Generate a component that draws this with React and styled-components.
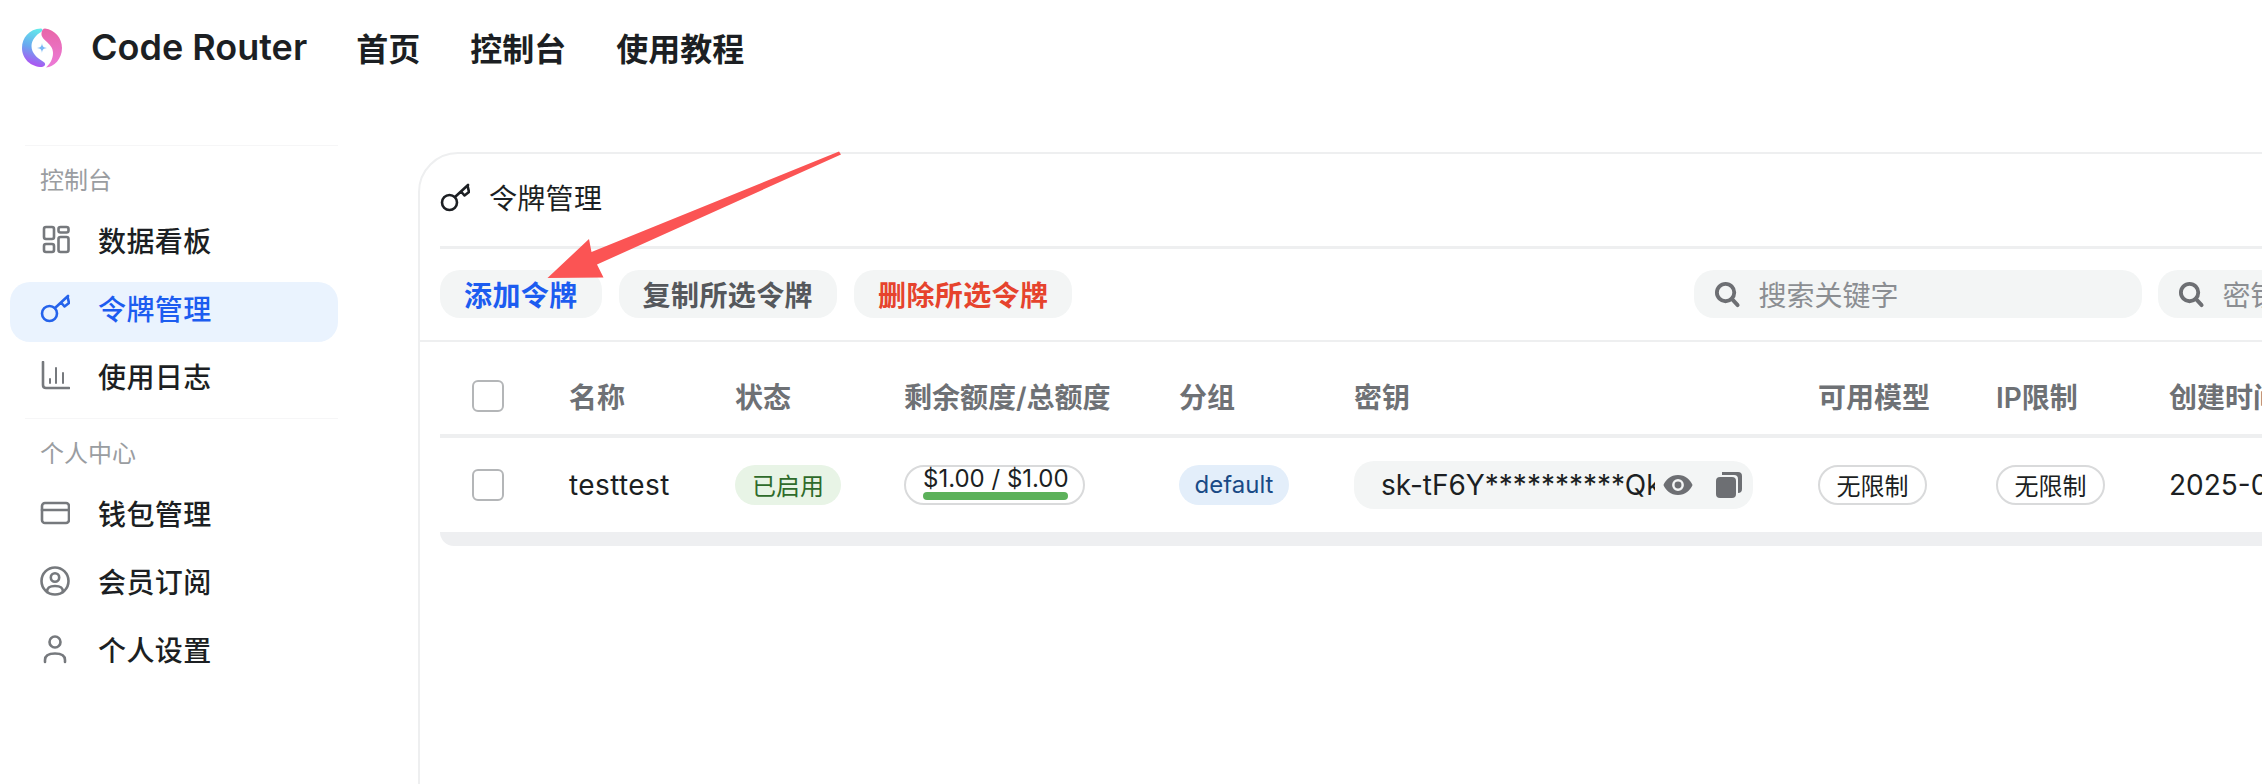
import React from 'react';
import styled, { createGlobalStyle } from 'styled-components';

const Global = createGlobalStyle`
  html, body { margin: 0; padding: 0; background: #fff; overflow: hidden; }
  * { box-sizing: border-box; }
  body { font-family: Inter, "Noto Sans CJK SC", sans-serif; color: #1c1f23; }
`;
const Page = styled.div`position: relative; width: 2262px; height: 784px; overflow: hidden;`;
const Header = styled.header`display: flex; align-items: center; height: 96px; padding-left: 22px;`;
const Brand = styled.div`font-size: 36px; font-weight: 600; margin: 0 49px 2px 29px; white-space: nowrap;`;
const NavLink = styled.a`font-size: 32px; font-weight: 600; margin: 0 50px 2px 0; white-space: nowrap;`;
const Body = styled.div`display: flex; align-items: flex-start;`;
const Sidebar = styled.aside`flex: 0 0 418px; padding: 49px 80px 0 10px;`;
const Rule = styled.div`height: 1px; background: #f6f6f7; margin: ${p => p.$top || 0}px 0 0 15px;`;
const GroupLabel = styled.div`font-size: 24px; color: #9a9da1; line-height: 34px; padding-left: 30px; margin: ${p => p.$top}px 0 ${p => p.$bottom}px;`;
const Group = styled.nav`display: flex; flex-direction: column; gap: 8px;`;
const Item = styled.div`
  display: flex; align-items: center; height: 60px; padding: 0 0 8px 30px; border-radius: 20px;
  font-size: 28px; font-weight: 500; gap: 28px; white-space: nowrap; letter-spacing: .4px;
  color: ${p => p.$active ? '#1c5cf0' : '#1c1f23'};
  background: ${p => p.$active ? '#eaf3fe' : 'transparent'};
  svg { flex: none; color: ${p => p.$active ? '#2563eb' : '#76797d'}; }
`;
const Main = styled.main`flex: none; padding-top: 56px;`;
const Card = styled.section`width: 1900px; height: 700px; border: 2.5px solid #eeeff0; border-radius: 40px;`;
const CardHead = styled.div`margin-left: 20px; display: flex; align-items: center; gap: 19px; height: 92px; padding-bottom: 7px; font-size: 28px; letter-spacing: .3px; white-space: nowrap;`;
const HeadRule = styled.div`height: 2.5px; background: #eeeff0; margin-left: 20px;`;
const Toolbar = styled.div`display: flex; align-items: center; height: 93px; padding-left: 20px; border-bottom: 2.5px solid #eeeff0;`;
const Btn = styled.button`
  height: 48px; border: 0; border-radius: 20px; background: #f3f5f5; font: 600 28px Inter, "Noto Sans CJK SC", sans-serif; letter-spacing: .4px;
  padding: 0 24px; margin-right: 17px; white-space: nowrap; color: ${p => p.$color};
`;
const Search = styled.div`
  flex: none; display: flex; align-items: center; gap: 17px; width: 448px; height: 48px; border-radius: 20px; background: #f3f5f5;
  padding-left: 20px; margin-left: ${p => p.$left}px; font-size: 28px; color: #8b8e92; white-space: nowrap; overflow: hidden;
`;
const Columns = `display: grid; grid-template-columns: 97px 166px 169px 275px 175px 464px 178px 173px 300px; align-items: center; margin-left: 20px; padding-left: 32px;`;
const HeadRow = styled.div`${Columns} height: 96px; border-bottom: 4px solid #eeeff0; font-size: 28px; font-weight: 600; color: #6e7175; white-space: nowrap; padding-top: 25px; padding-bottom: 8px;`;
const Row = styled.div`${Columns} height: 94px; font-size: 28px; white-space: nowrap;`;
const Check = styled.span`display: block; width: 32px; height: 32px; border: 2px solid #b4b6b8; border-radius: 6px; background: #fff;`;
const Name = styled.span`letter-spacing: .4px;`;
const Tag = styled.span`
  display: inline-flex; align-items: center; justify-content: center; width: ${p => p.$w}px; height: 40px; border-radius: 20px; font-size: 24px; letter-spacing: 0;
  background: ${p => p.$bg || '#fff'}; color: ${p => p.$color || '#1c1f23'};
  border: ${p => p.$outlined ? '2px solid #d9dadb' : '0'};
`;
const Quota = styled.div`
  width: 181px; height: 40px; border: 2px solid #d9dadb; border-radius: 20px; font-size: 24px; line-height: 24px; padding-left: 17px;
  display: flex; flex-direction: column; gap: 1px;
`;
const Bar = styled.div`width: 145px; height: 8px; background: #5cb15a; border-radius: 4px;`;
const KeyBox = styled.div`display: flex; align-items: center; width: 399px; height: 48px; border-radius: 20px; background: #f3f5f5; padding-left: 27px;`;
const KeyText = styled.div`width: 274px; overflow: hidden; font-size: 28px; flex: none;`;
const KeyIcons = styled.div`display: flex; align-items: center; gap: 23px; margin-left: 8px;`;
const Footer = styled.div`height: 14px; background: #eeeff1; margin-left: 20px; border-radius: 0 0 0 24px;`;
const ArrowOverlay = styled.svg`position: absolute; left: 0; top: 0; pointer-events: none;`;

const Logo = () => (
  <svg width="40" height="40" viewBox="0 0 40 40">
    <defs>
      <linearGradient id="lg1" x1="0.6" y1="0" x2="0.4" y2="1"><stop offset="0" stopColor="#62e9ea"/><stop offset=".5" stopColor="#6aa8f0"/><stop offset="1" stopColor="#b648f2"/></linearGradient>
      <linearGradient id="lg2" x1="0.5" y1="0" x2="0.5" y2="1"><stop offset="0" stopColor="#e866a8"/><stop offset="1" stopColor="#ec7ad8"/></linearGradient>
    </defs>
    <path fill="url(#lg1)" d="M19 0.500C7 1 0 10 0 20C0 31 9 39 20 39C24 38 24 35 21 33.500C15 30 9.500 25 9.500 18C9.500 12 14 7 19 4C21 3 21 1 19 0.500Z"/>
    <path fill="url(#lg2)" d="M23 0.500C33 2 40 10 40 20C40 31 32 39 24 39.500C28 36 31 31 31 25C31 20 28 17 25 14C22 11 19 9 19.500 5C20 2 21 0.500 23 0.500Z"/>
    <path fill="#7ab8f5" d="M20 15C20.400 18.500 21.500 19.600 25 20C21.500 20.400 20.400 21.500 20 25C19.600 21.500 18.500 20.400 15 20C18.500 19.600 19.600 18.500 20 15Z"/>
  </svg>
);
const Ico = ({ children, w = 30, h = 30 }) => (
  <svg width={w} height={h} viewBox="0 0 30 30" fill="none" stroke="currentColor" strokeWidth="2.6" strokeLinecap="round" strokeLinejoin="round">{children}</svg>
);
const Grid = () => <Ico><rect x="4" y="2" width="10" height="12" rx="2"/><rect x="4" y="19" width="10" height="8" rx="2"/><rect x="18.500" y="2" width="10" height="5.500" rx="2"/><rect x="18.500" y="12" width="10" height="15" rx="2"/></Ico>;
const KeyI = ({ size = 30 }) => <Ico w={size} h={size}><circle cx="9.500" cy="20.500" r="7.500"/><path d="M15 15L28 3M21 9.500L24.500 13.500L29 10L27.500 3.500"/></Ico>;
const Chart = () => <Ico><path d="M3 1V24Q3 27 6 27H29"/><path strokeWidth="2" d="M10 22V18M16 22V7M23 22V12"/></Ico>;
const Wallet = () => <Ico><rect x="2" y="5" width="27" height="20" rx="3"/><path d="M2 12H29"/></Ico>;
const Circle = () => <Ico><circle cx="15" cy="15" r="13.500"/><circle cx="15" cy="11.500" r="4.200"/><path d="M7 26C7 21 10 20 15 20C20 20 23 21 23 26"/></Ico>;
const User = () => <Ico><circle cx="15" cy="8" r="5.500"/><path d="M5 28V26C5 21 9 19.500 15 19.500C21 19.500 25 21 25 26V28"/></Ico>;
const SearchI = () => (
  <svg width="27" height="27" viewBox="0 0 28 28" fill="none" stroke="#6d6f73" strokeWidth="4" strokeLinecap="round" style={{ flex: 'none' }}><circle cx="12" cy="12" r="9"/><path d="M18.500 18.500L24.500 25"/></svg>
);
const Eye = () => (
  <svg width="30" height="20" viewBox="0 0 32 22"><path fill="#6d6f73" fillRule="evenodd" d="M16 0C24 0 29.500 5 32 11C29.500 17 24 22 16 22C8 22 2.500 17 0 11C2.500 5 8 0 16 0ZM16 4.500A6.500 6.500 0 1 0 16 17.500A6.500 6.500 0 1 0 16 4.500Z"/><circle cx="16" cy="11" r="3.800" fill="#6d6f73"/></svg>
);
const Copy = () => (
  <svg width="26" height="26" viewBox="0 0 26 26"><rect x="0" y="5" width="20" height="21" rx="4" fill="#6d6f73"/><path fill="#6d6f73" d="M6 0H22Q26 0 26 4V17Q26 21 22 21V7Q22 3 18 3H6Z"/></svg>
);

export default function App() {
  return (
    <Page>
      <Global />
      <Header>
        <Logo />
        <Brand>Code Router</Brand>
        <NavLink>首页</NavLink>
        <NavLink>控制台</NavLink>
        <NavLink>使用教程</NavLink>
      </Header>
      <Body>
        <Sidebar>
          <Rule />
          <GroupLabel $top={18} $bottom={16}>控制台</GroupLabel>
          <Group>
            <Item><Grid />数据看板</Item>
            <Item $active><KeyI />令牌管理</Item>
            <Item><Chart />使用日志</Item>
          </Group>
          <Rule $top={8} />
          <GroupLabel $top={18} $bottom={16}>个人中心</GroupLabel>
          <Group>
            <Item><Wallet />钱包管理</Item>
            <Item><Circle />会员订阅</Item>
            <Item><User />个人设置</Item>
          </Group>
        </Sidebar>
        <Main>
          <Card>
            <CardHead><KeyI />令牌管理</CardHead>
            <HeadRule />
            <Toolbar>
              <Btn $color="#1c5cf0">添加令牌</Btn>
              <Btn $color="#55585c">复制所选令牌</Btn>
              <Btn $color="#e6432d">删除所选令牌</Btn>
              <Search $left={605}><SearchI />搜索关键字</Search>
              <Search $left={16}><SearchI />密钥</Search>
            </Toolbar>
            <HeadRow>
              <Check /><span>名称</span><span>状态</span><span>剩余额度/总额度</span><span>分组</span><span>密钥</span><span>可用模型</span><span>IP限制</span><span>创建时间</span>
            </HeadRow>
            <Row>
              <Check />
              <Name>testtest</Name>
              <span><Tag $w={106} $bg="#e8f4e6" $color="#2f6b2b">已启用</Tag></span>
              <Quota>$1.00 / $1.00<Bar /></Quota>
              <span><Tag $w={110} $bg="#e3eefa" $color="#1a4a86">default</Tag></span>
              <KeyBox>
                <KeyText>sk-tF6Y**********Qk</KeyText>
                <KeyIcons><Eye /><Copy /></KeyIcons>
              </KeyBox>
              <span><Tag $w={109} $outlined>无限制</Tag></span>
              <span><Tag $w={109} $outlined>无限制</Tag></span>
              <span>2025-06-18 12:00:00</span>
            </Row>
            <Footer />
          </Card>
        </Main>
      </Body>
      <ArrowOverlay width="2262" height="784" viewBox="0 0 2262 784">
        <path fill="#fb5454" d="M839 151.500L841 154.500L597 264.500L603.500 277.500L547.500 278L589 239L591.500 252Z"/>
      </ArrowOverlay>
    </Page>
  );
}
